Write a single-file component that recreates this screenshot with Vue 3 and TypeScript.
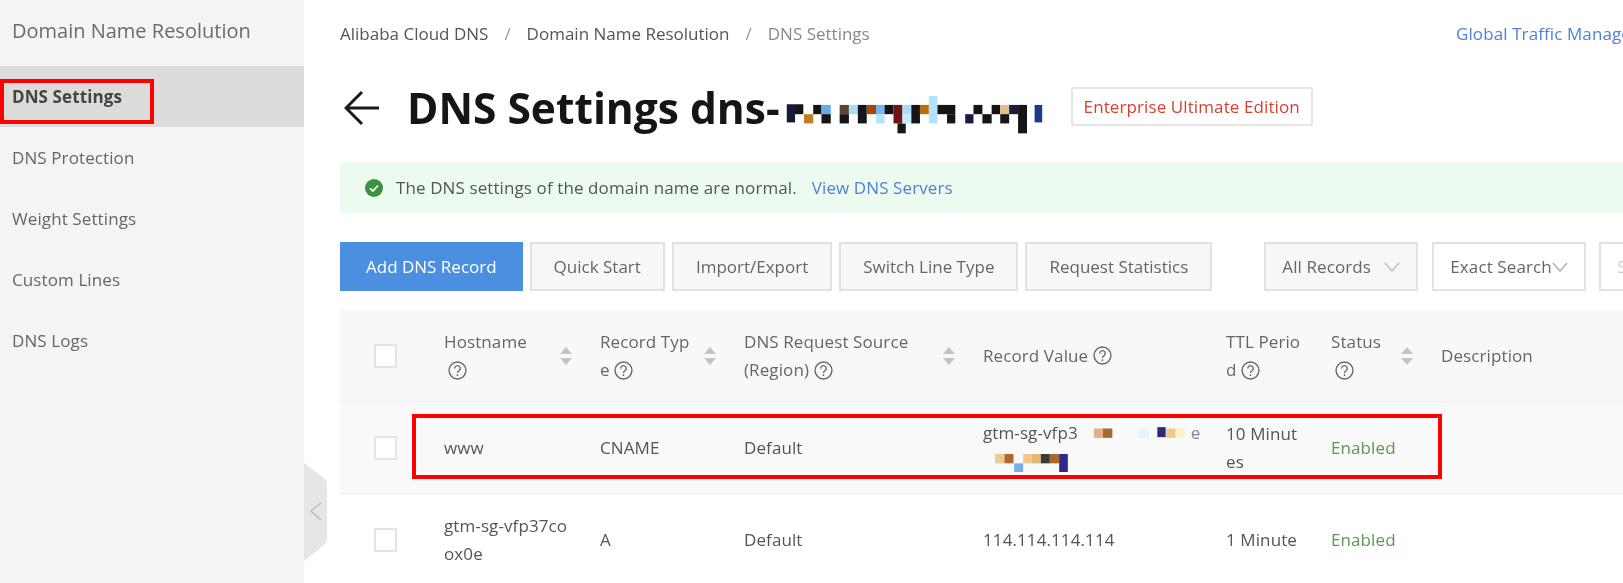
<script setup lang="ts">
type Tile = [number, number, number, number, string]
const k = '#151515', n = '#1a1a45', lb = '#a9dcfb'
const titleTiles: Tile[] = [
  [60,70,25,55,'#141a3a'],[85,70,25,30,k],[112,100,28,28,'#c07f28'],[140,72,25,28,k],[165,72,28,28,'#66ace6'],[165,100,28,28,k],
  [220,72,28,28,'#5b4530'],[220,100,28,28,k],[248,72,27,28,lb],[275,72,27,56,k],[302,72,28,28,'#a04a0a'],[330,72,26,28,'#74b4f0'],
  [330,100,26,28,'#b5e3fb'],[356,72,27,28,k],[383,72,27,56,'#6d1414'],[395,128,25,30,k],[410,72,27,28,lb],[410,100,27,28,'#c5eafb'],
  [437,72,26,56,k],[463,72,27,28,'#b9700a'],[490,45,26,83,'#b3e2fa'],[516,72,54,28,k],[545,100,25,28,k],[600,100,25,28,n],
  [625,72,27,28,k],[652,100,28,28,k],[680,72,26,28,k],[706,72,27,28,'#e5bd86'],[706,100,27,28,k],[733,72,27,28,n],[760,72,27,86,k],[810,72,23,53,'#1c3a8c'],
]
const valueTop: Tile[] = [[0,4,27,28,'#e3b08c'],[27,4,28,28,'#a9682f'],[133,4,32,28,'#e3f4fb'],[190,0,25,30,'#2e2a78'],[217,4,28,28,'#f0c88c'],[245,4,28,28,'#faf3c8']]
const valueBottom: Tile[] = [[0,0,28,28,'#eec98f'],[28,0,27,28,'#ab6b30'],[57,28,27,26,'#76aeea'],[84,0,26,28,'#f0c88c'],[110,0,27,28,'#e4b878'],[137,0,27,28,'#3a3a3a'],[164,0,28,28,'#a9682f'],[192,0,26,54,'#2e2a8a']]

const nav = ['DNS Settings', 'DNS Protection', 'Weight Settings', 'Custom Lines', 'DNS Logs']
const actions = ['Quick Start', 'Import/Export', 'Switch Line Type', 'Request Statistics']
</script>

<template>
  <div class="page">
    <aside class="side">
      <div class="side-title">Domain Name Resolution</div>
      <a v-for="(item, i) in nav" :key="item" class="nav" :class="{ active: i === 0 }">{{ item }}</a>
    </aside>

    <main class="main">
      <div class="top">
        <div class="crumbs">
          <span>Alibaba Cloud DNS</span><i>/</i><span>Domain Name Resolution</span><i>/</i><span class="cur">DNS Settings</span>
        </div>
        <a class="link">Global Traffic Manager</a>
      </div>

      <div class="head">
        <svg class="back" viewBox="0 0 36 36" width="36" height="36"><path d="M35 18H2M18 2 2 18l16 16" fill="none" stroke="#1a1a1a" stroke-width="3"/></svg>
        <h1>DNS Settings dns-</h1>
        <svg class="mosaic" viewBox="55 45 780 115" width="260" height="38"><rect v-for="(t, i) in titleTiles" :key="i" :x="t[0]" :y="t[1]" :width="t[2]" :height="t[3]" :fill="t[4]"/></svg>
        <span class="tag">Enterprise Ultimate Edition</span>
      </div>

      <div class="alert">
        <svg viewBox="0 0 18 18" width="18" height="18"><circle cx="9" cy="9" r="9" fill="#3f9142"/><path d="M5 9.3 8 12l5-5.5" fill="none" stroke="#fff" stroke-width="1.8"/></svg>
        <span>The DNS settings of the domain name are normal.</span>
        <a class="link">View DNS Servers</a>
      </div>

      <div class="tools">
        <button class="btn primary">Add DNS Record</button>
        <button v-for="a in actions" :key="a" class="btn">{{ a }}</button>
        <div class="sel grey">All Records<svg viewBox="0 0 16 10" width="16" height="10"><path d="M1 1l7 8 7-8" fill="none" stroke="#bbb" stroke-width="1.2"/></svg></div>
        <div class="sel exact">Exact Search<svg viewBox="0 0 16 10" width="16" height="10"><path d="M1 1l7 8 7-8" fill="none" stroke="#aaa" stroke-width="1.2"/></svg></div>
        <div class="sel search">Search</div>
      </div>

      <div class="table">
        <div class="row header">
          <div class="cell"><span class="check"></span></div>
          <div class="cell sortable"><span class="w96">Hostname <svg class="help" viewBox="0 0 18 18"><circle cx="9" cy="9" r="8" /><path d="M6.4 7a2.6 2.6 0 1 1 4 2.2c-.9.6-1.4 1-1.4 2.1M9 12.6v1.5"/></svg></span><svg class="sort" viewBox="0 0 12 18" width="12" height="18"><path d="M6 0l6 7H0zM0 11h12l-6 7z"/></svg></div>
          <div class="cell sortable"><span class="w92 brk">Record Type <svg class="help tight" viewBox="0 0 18 18"><circle cx="9" cy="9" r="8" /><path d="M6.4 7a2.6 2.6 0 1 1 4 2.2c-.9.6-1.4 1-1.4 2.1M9 12.6v1.5"/></svg></span><svg class="sort" viewBox="0 0 12 18" width="12" height="18"><path d="M6 0l6 7H0zM0 11h12l-6 7z"/></svg></div>
          <div class="cell sortable"><span class="w200">DNS Request Source (Region) <svg class="help tight" viewBox="0 0 18 18"><circle cx="9" cy="9" r="8" /><path d="M6.4 7a2.6 2.6 0 1 1 4 2.2c-.9.6-1.4 1-1.4 2.1M9 12.6v1.5"/></svg></span><svg class="sort" viewBox="0 0 12 18" width="12" height="18"><path d="M6 0l6 7H0zM0 11h12l-6 7z"/></svg></div>
          <div class="cell">Record Value <svg class="help tight" viewBox="0 0 18 18"><circle cx="9" cy="9" r="8" /><path d="M6.4 7a2.6 2.6 0 1 1 4 2.2c-.9.6-1.4 1-1.4 2.1M9 12.6v1.5"/></svg></div>
          <div class="cell"><span class="w78 brk">TTL Period <svg class="help tight" viewBox="0 0 18 18"><circle cx="9" cy="9" r="8" /><path d="M6.4 7a2.6 2.6 0 1 1 4 2.2c-.9.6-1.4 1-1.4 2.1M9 12.6v1.5"/></svg></span></div>
          <div class="cell sortable"><span class="w60">Status <svg class="help" viewBox="0 0 18 18"><circle cx="9" cy="9" r="8" /><path d="M6.4 7a2.6 2.6 0 1 1 4 2.2c-.9.6-1.4 1-1.4 2.1M9 12.6v1.5"/></svg></span><svg class="sort" viewBox="0 0 12 18" width="12" height="18"><path d="M6 0l6 7H0zM0 11h12l-6 7z"/></svg></div>
          <div class="cell">Description</div>
        </div>
        <div class="row shaded">
          <div class="cell"><span class="check"></span></div>
          <div class="cell">www</div>
          <div class="cell">CNAME</div>
          <div class="cell">Default</div>
          <div class="cell value">
            <div class="vline">gtm-sg-vfp3<svg viewBox="0 0 273 32" width="91" height="11"><rect v-for="(t, i) in valueTop" :key="i" :x="t[0]" :y="t[1]" :width="t[2]" :height="t[3]" :fill="t[4]"/></svg><span class="faint">e</span></div>
            <div class="vline second"><svg viewBox="0 0 218 54" width="73" height="18"><rect v-for="(t, i) in valueBottom" :key="i" :x="t[0]" :y="t[1]" :width="t[2]" :height="t[3]" :fill="t[4]"/></svg></div>
          </div>
          <div class="cell"><span class="w78 brk">10 Minutes</span></div>
          <div class="cell ok">Enabled</div>
          <div class="cell"></div>
        </div>
        <div class="row">
          <div class="cell"><span class="check"></span></div>
          <div class="cell"><span class="w132 brk">gtm-sg-vfp37coox0e</span></div>
          <div class="cell">A</div>
          <div class="cell">Default</div>
          <div class="cell">114.114.114.114</div>
          <div class="cell">1 Minute</div>
          <div class="cell ok">Enabled</div>
          <div class="cell"></div>
        </div>
      </div>
    </main>

    <div class="handle">
      <svg viewBox="0 0 24 98" width="24" height="98"><path d="M0 0 20 15Q23 17 23 20V77Q23 80 20 82L0 98Z" fill="#e6e6e6"/><path d="M17 40 7 48l10 9" fill="none" stroke="#bdbdbd" stroke-width="1.5"/></svg>
    </div>
    <div class="mark mark-nav"></div>
    <div class="mark mark-row"></div>
  </div>
</template>

<style>
body { margin: 0; background: #fff; }
</style>

<style scoped>
.page { position: relative; display: flex; width: 1623px; height: 583px; overflow: hidden; background: #fff; color: #555; font: 17px/28px "Open Sans", "Noto Sans", sans-serif; letter-spacing: .1px; filter: blur(.35px); }
.side { flex: none; width: 304px; background: #f4f4f4; }
.side-title { height: 66px; padding: 0 12px 4px; box-sizing: border-box; display: flex; align-items: center; font-size: 20px; letter-spacing: 0; color: #6b6b6b; }
.nav { display: flex; align-items: center; height: 61px; padding-left: 12px; color: #666; }
.nav.active { background: #dcdcdc; color: #444; font-weight: 700; padding-bottom: 0; }
.main { flex: 1; min-width: 0; padding: 18px 0 0 36px; overflow: hidden; }
.top { display: flex; align-items: center; height: 32px; white-space: nowrap; }
.crumbs { flex: 0 0 1116px; display: flex; letter-spacing: 0; }
.crumbs i { margin: 0 16px; color: #999; font-style: normal; }
.cur { color: #888; }
.link { color: #4f7fd9; flex: none; }
.head { display: flex; align-items: center; height: 42px; margin-top: 37px; white-space: nowrap; }
.back { flex: none; margin: 0 27px 0 4px; }
h1 { margin: 0; font-size: 42.5px; line-height: 42px; letter-spacing: 0; color: #151515; font-weight: 700; }
.mosaic { flex: none; margin: 13px 0 0 4px; }
.tag { flex: none; box-sizing: border-box; margin: 0 0 3px 27px; height: 39px; padding: 0 11px; border: 2px solid #e6e6e6; border-radius: 2px; display: flex; align-items: center; color: #d8402f; }
.alert { display: flex; align-items: center; height: 51px; margin-top: 33px; padding-left: 25px; background: #edfaf0; white-space: nowrap; }
.alert svg { margin-right: 13px; }
.alert .link { margin-left: 15px; }
.tools { display: flex; align-items: center; gap: 7px; height: 49px; margin-top: 29px; white-space: nowrap; }
.btn { flex: none; height: 49px; padding: 0 22px; border: 2px solid #e2e2e2; background: #f7f7f7; color: #666; font: inherit; letter-spacing: 0; }
.btn.primary { padding: 0 24px; border-color: #4a8fe0; background: #4a8fe0; color: #fff; }
.sel { flex: none; box-sizing: border-box; width: 154px; height: 49px; padding: 0 16px; border: 2px solid #e2e2e2; display: flex; align-items: center; justify-content: space-between; color: #666; }
.sel.grey { margin-left: 45px; background: #f7f7f7; }
.sel.exact { margin-left: 7px; }
.sel.search { margin-left: 6px; width: 200px; color: #ccc; }
.table { margin-top: 19px; width: 1400px; }
.row { display: grid; grid-template-columns: 104px 156px 144px 239px 243px 105px 110px 1fr; height: 92px; box-sizing: border-box; border-bottom: 1px solid #ececf0; }
.header { background: #f8f8f8; color: #666; }
.shaded { background: #f9f9f9; }
.cell { display: flex; align-items: center; min-width: 0; white-space: normal; gap: 5px; }
.cell:first-child { padding-left: 34px; }
.sortable { justify-content: space-between; padding-right: 28px; }
.check { display: block; width: 23px; height: 24px; background: #fff; border: 2px solid #e4e4e4; box-sizing: border-box; }
.w96 { width: 96px; } .w92 { width: 92px; } .w200 { width: 190px; } .w78 { width: 78px; } .w60 { width: 60px; } .w132 { width: 132px; }
.brk { word-break: break-all; }
.help { width: 19px; height: 19px; vertical-align: -4px; margin-left: 4px; fill: none; stroke: #666; stroke-width: 1.3; }
.help.tight { margin-left: 0; }
.sort { flex: none; fill: #c4c4c4; }
.value { display: block; align-self: center; }
.vline { display: flex; align-items: center; height: 30px; }
.vline svg { flex: none; margin-left: 16px; }
.vline.second svg { margin-left: 12px; }
.faint { margin-left: 6px; color: #888; }
.ok { color: #5a9a4e; }
.handle { position: absolute; left: 304px; top: 463px; height: 98px; }
.mark { position: absolute; box-sizing: border-box; border: 4px solid #f00; }
.mark-nav { left: 0; top: 79px; width: 154px; height: 45px; }
.mark-row { left: 412px; top: 414px; width: 1030px; height: 65px; }
</style>
